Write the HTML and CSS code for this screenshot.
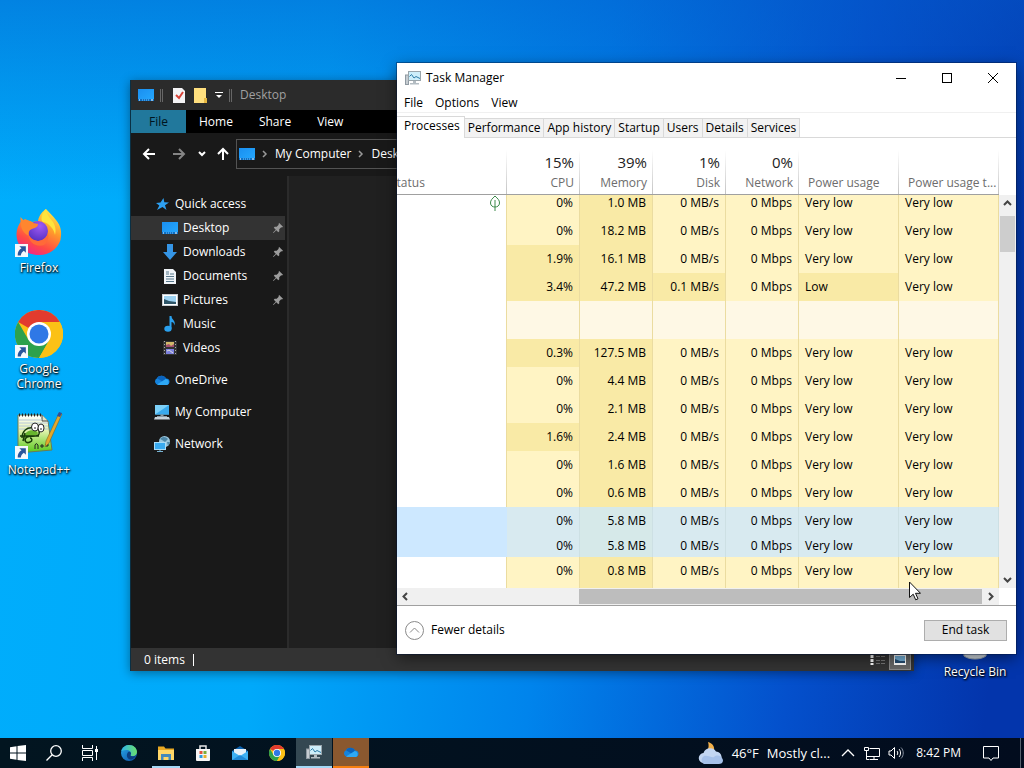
FILE: index.html
```html
<!DOCTYPE html>
<html lang="en">
<head>
    <meta charset="UTF-8">
    <meta name="viewport" content="width=device-width, initial-scale=1.0">
    <title>Desktop</title>
    <link rel="stylesheet" href="styles.css">
</head>
<body>
    <!-- Shared icons -->
    <svg class="sprite" aria-hidden="true">
        <defs>
            <linearGradient id="blue-screen" x1="0" y1="0" x2="1" y2="1">
                <stop offset="0" stop-color="#1a8ff0"/>
                <stop offset="1" stop-color="#25a9ff"/>
            </linearGradient>
            <linearGradient id="fox-body" x1="0.8" y1="0" x2="0.3" y2="1">
                <stop offset="0" stop-color="#fff04a"/>
                <stop offset="0.4" stop-color="#ff9a2b"/>
                <stop offset="0.75" stop-color="#ff4a45"/>
                <stop offset="1" stop-color="#f0258a"/>
            </linearGradient>
            <radialGradient id="fox-globe" cx="0.6" cy="0.25" r="0.8">
                <stop offset="0" stop-color="#a05af5"/>
                <stop offset="1" stop-color="#5530c0"/>
            </radialGradient>
            <linearGradient id="note-green" x1="0" y1="0" x2="0" y2="1">
                <stop offset="0" stop-color="#ffffff"/>
                <stop offset="0.4" stop-color="#e4f3b0"/>
                <stop offset="1" stop-color="#55c818"/>
            </linearGradient>
            <linearGradient id="edge-blue" x1="0" y1="0" x2="1" y2="1">
                <stop offset="0" stop-color="#28a8e8"/>
                <stop offset="1" stop-color="#0c4fa8"/>
            </linearGradient>
            <linearGradient id="edge-green" x1="0" y1="0" x2="1" y2="0">
                <stop offset="0" stop-color="#2fb5ea"/>
                <stop offset="1" stop-color="#6be06b"/>
            </linearGradient>
        </defs>
        <symbol id="icon-desktop" viewBox="0 0 16 16">
            <rect x="0" y="2" width="16" height="12" fill="url(#blue-screen)"/>
            <rect x="0" y="12" width="16" height="2" fill="#0b6fc4"/>
            <path d="M1 13h1M13 13h2" stroke="#fff"/>
            <path d="M4 13h7" stroke="#7cc6ff" stroke-dasharray="1 1"/>
        </symbol>
        <symbol id="icon-arrow" viewBox="0 0 12 12">
            <rect width="12" height="12" fill="#f5f8fc"/>
            <path d="M4 2h6v6L8.200 6.200C6.500 7.200 5.600 8.500 5.400 10.500H2.500C2.400 7.500 3.600 5.500 6 4z" fill="#2a569c"/>
        </symbol>
        <symbol id="icon-chrome" viewBox="0 0 48 48">
            <circle cx="24" cy="24" r="24" fill="#fbc116"/>
            <path d="M24 24L3.200 12A24 24 0 0 1 44.800 12z" fill="#e23b2e"/>
            <path d="M3.200 12A24 24 0 0 0 24 48L34.400 30 24 24 13.600 30z" fill="#2da14c"/>
            <path d="M24 12h20.800A24 24 0 0 1 24 48l10.400-18z" fill="#fbc116"/>
            <circle cx="24" cy="24" r="12" fill="#fff"/>
            <circle cx="24" cy="24" r="9.500" fill="#2f78e6"/>
        </symbol>
        <symbol id="icon-taskmgr" viewBox="0 0 16 16">
            <rect x="0.500" y="5" width="3" height="9.500" fill="#c6ccd1" stroke="#8f9aa2"/>
            <rect x="3.500" y="1.500" width="12" height="9" fill="#cdeefa" stroke="#9aa5ab"/>
            <path d="M4.500 6.500l2-2 2.500 3.500 2-1.500 4 2" fill="none" stroke="#2c7ba6"/>
            <path d="M8 11h3v2h-3zM5 13h9v1.500H5z" fill="#b4bdc3"/>
        </symbol>
        <symbol id="icon-pin" viewBox="0 0 10 10">
            <path d="M6.200 0L10 3.800l-1 .7-.8-.2-2 2 .1 2-1 .9L3.300 7.200.5 10 0 9.500l2.800-2.800L.8 4.700l.9-1 2 .1 2-2-.2-.8z" fill="#9c9c9c"/>
        </symbol>
        <symbol id="icon-cloud" viewBox="0 0 16 16">
            <path d="M4.500 13A3.600 3.600 0 0 1 3 6.200 5.200 5.200 0 0 1 12 6.500 3.300 3.300 0 0 1 13 13z" fill="#1583dd"/>
            <path d="M3 12.500L11.800 7A3.200 3.200 0 0 1 13 13H4.500z" fill="#2ea8f5"/>
            <path d="M3 6.200A5.200 5.200 0 0 1 12 6.500L8 9.200z" fill="#0a63bd"/>
        </symbol>
    </svg>

    <main class="desktop">
        <!-- Desktop icons -->
        <nav class="shortcuts" aria-label="Desktop icons">
            <a class="shortcut" href="#">
                <span class="shortcut-icon">
                    <svg viewBox="0 0 48 48">
                        <path d="M31 0c3 3 7 7 10 11 5 6 6 12 4.500 20A22 22 0 0 1 24 46C10 46 1.500 37 1.500 25c0-5 2-9 4-12V8l4.500 5c2-1 5-1 7 0L23 12C24 6 28 2 31 0z" fill="url(#fox-body)"/>
                        <circle cx="23" cy="22" r="10" fill="url(#fox-globe)"/>
                        <path d="M6 13l4-3c3 2 6 1 8 4l5 1c0 3-3 4-6 5-3 1-4 4-3 7-5-2-9-8-8-14z" fill="#ff862f"/>
                        <path d="M13 24c2 6 6 8 11 8 5-1 8-4 9-8 1 5 0 9-4 12-8 3-16-3-16-12z" fill="#ff6a38"/>
                        <path d="M31 0c0 5 4 9 7 13 3 5 3 9 2 13-1-6-6-12-12-13-3-2-1-9 3-13z" fill="#ffe43d"/>
                    </svg>
                    <svg class="shortcut-arrow"><use href="#icon-arrow"/></svg>
                </span>
                <span>Firefox</span>
            </a>
            <a class="shortcut" href="#">
                <span class="shortcut-icon">
                    <svg><use href="#icon-chrome"/></svg>
                    <svg class="shortcut-arrow"><use href="#icon-arrow"/></svg>
                </span>
                <span>Google Chrome</span>
            </a>
            <a class="shortcut" href="#">
                <span class="shortcut-icon">
                    <svg viewBox="0 0 48 48">
                        <path d="M3 4h24l6 6 4 29-34 3z" fill="url(#note-green)" stroke="#6d7a55"/>
                        <path d="M27 4v6h6" fill="#dde5cf" stroke="#444"/>
                        <path d="M4 9h23M4 12h29M4 15h29M4 18h29" stroke="#b8c8d8"/>
                        <path d="M4 4h22" stroke="#222" stroke-width="3" stroke-dasharray="1 2"/>
                        <path d="M9 26c1-6 7-8 12-6 4 2 1 5-4 5-4 0-6 3-7 3z" fill="#67b52e"/>
                        <path d="M7 27c0-7 5-11 11-10 5 0 7 3 6 6-2 4-8 1-12 3-4 3-1 7 3 5 3-1 2-4 0-4M5 25h19M10 22l-2 8" fill="none" stroke="#173b08" stroke-width="1.500"/>
                        <ellipse cx="20" cy="16" rx="3.500" ry="4" fill="#fff" stroke="#222"/>
                        <ellipse cx="26" cy="17" rx="3" ry="4" fill="#fff" stroke="#222"/>
                        <path d="M20 16v2M26 17v2M20 38v-4q1-3 3 0v4M25 35h4M27 33v4M30 34h4M32 32v4" fill="none" stroke="#222"/>
                        <path d="M44 2l3 1-13 29-4 4 1-6z" fill="#e3a82d" stroke="#795919" stroke-width="0.500"/>
                        <path d="M44 1l3 1-2 4-3-1z" fill="#304f98"/>
                    </svg>
                    <svg class="shortcut-arrow"><use href="#icon-arrow"/></svg>
                </span>
                <span>Notepad++</span>
            </a>
        </nav>
        <a class="shortcut recycle-bin" href="#">
            <span class="shortcut-icon">
                <svg viewBox="0 0 48 48">
                    <path d="M8 5h32l-5 38c-5 4-17 4-22 0z" fill="#d5dde4" stroke="#9daab5"/>
                </svg>
            </span>
            <span>Recycle Bin</span>
        </a>

        <!-- File Explorer -->
        <section class="window explorer" aria-label="Desktop folder">
            <header class="explorer-title">
                <svg class="icon"><use href="#icon-desktop"/></svg>
                <span class="bar"></span>
                <svg class="icon" viewBox="0 0 16 16">
                    <path d="M2 1h9l3 3v12H2z" fill="#f4f4f6"/>
                    <path d="M5 8l3 3 4-6" fill="none" stroke="#d84338" stroke-width="2"/>
                </svg>
                <svg class="icon" viewBox="0 0 16 16">
                    <path d="M1 1h12v12l1 3H1z" fill="#ffdf7e"/>
                    <path d="M11 16v-5h3v5z" fill="#e7b842"/>
                </svg>
                <svg class="icon-small" viewBox="0 0 8 8">
                    <path d="M0 1.500h8" stroke="#fff"/>
                    <path d="M1 4h6L4 7z" fill="#fff"/>
                </svg>
                <span class="bar"></span>
                <span>Desktop</span>
            </header>
            <div class="ribbon">
                <button class="ribbon-file">File</button>
                <button>Home</button>
                <button>Share</button>
                <button>View</button>
            </div>
            <div class="address-row">
                <button aria-label="Back"><svg viewBox="0 0 14 14"><path d="M13 7H2M7 2L2 7l5 5" fill="none" stroke="#fff" stroke-width="2"/></svg></button>
                <button class="forward" aria-label="Forward"><svg viewBox="0 0 14 14"><path d="M1 7h11M7 2l5 5-5 5" fill="none" stroke="#858585" stroke-width="2"/></svg></button>
                <button class="recent" aria-label="Recent"><svg viewBox="0 0 8 14"><path d="M1 5l3 3 3-3" fill="none" stroke="#fff" stroke-width="2"/></svg></button>
                <button class="up" aria-label="Up"><svg viewBox="0 0 14 14"><path d="M7 13V2M2 7l5-5 5 5" fill="none" stroke="#fff" stroke-width="2"/></svg></button>
                <div class="address">
                    <svg class="icon"><use href="#icon-desktop"/></svg>
                    <svg class="crumb" viewBox="0 0 6 8"><path d="M1 1l3 3-3 3" fill="none" stroke="#999" stroke-width="1.500"/></svg>
                    <span>My Computer</span>
                    <svg class="crumb" viewBox="0 0 6 8"><path d="M1 1l3 3-3 3" fill="none" stroke="#999" stroke-width="1.500"/></svg>
                    <span>Desktop</span>
                </div>
            </div>
            <div class="explorer-body">
                <nav class="tree" aria-label="Folders">
                    <a class="node" href="#">
                        <svg class="icon" viewBox="0 0 16 16"><path d="M9.500 2l.8 4.200 4.700.3-4 2.700 1.500 4.800L8.500 11 3 14l2.300-4.500L2 7l4.500-.6z" fill="#2da0f2"/></svg>
                        <span>Quick access</span>
                    </a>
                    <a class="node child selected" href="#">
                        <svg class="icon"><use href="#icon-desktop"/></svg>
                        <span>Desktop</span>
                        <svg class="pin"><use href="#icon-pin"/></svg>
                    </a>
                    <a class="node child" href="#">
                        <svg class="icon" viewBox="0 0 16 16"><path d="M5 0h6v8h4l-7 8-7-8h4z" fill="#3595e6"/></svg>
                        <span>Downloads</span>
                        <svg class="pin"><use href="#icon-pin"/></svg>
                    </a>
                    <a class="node child" href="#">
                        <svg class="icon" viewBox="0 0 16 16">
                            <path d="M2 1h9l3 3v12H2z" fill="#f0f4f8"/>
                            <path d="M4 4h3M4 6h3M8 6h4M4 8.500h8M4 11h8M4 13.500h8" stroke="#57788c"/>
                        </svg>
                        <span>Documents</span>
                        <svg class="pin"><use href="#icon-pin"/></svg>
                    </a>
                    <a class="node child" href="#">
                        <svg class="icon" viewBox="0 0 16 16">
                            <rect x="0.500" y="2.500" width="15" height="11" fill="#fff" stroke="#c9ced2"/>
                            <rect x="2" y="4" width="12" height="8" fill="#9ed3f2"/>
                            <path d="M2 7l5 2 7 1v2H2z" fill="#2f5668"/>
                        </svg>
                        <span>Pictures</span>
                        <svg class="pin"><use href="#icon-pin"/></svg>
                    </a>
                    <a class="node child" href="#">
                        <svg class="icon" viewBox="0 0 16 16">
                            <path d="M7.500 0h2c0 4 4.500 4 3 9.500C12 7 11 6 9.500 6v6.500h-2z" fill="#2aa1ef"/>
                            <ellipse cx="6" cy="12.800" rx="3.700" ry="3" fill="#2aa1ef"/>
                        </svg>
                        <span>Music</span>
                    </a>
                    <a class="node child" href="#">
                        <svg class="icon" viewBox="0 0 16 16">
                            <rect x="1" y="1" width="14" height="14" fill="#333"/>
                            <path d="M2.500 1v14M13.500 1v14" stroke="#aaa" stroke-dasharray="1 2"/>
                            <rect x="4" y="2" width="8" height="5" fill="#d1b96a"/>
                            <path d="M4 5l3-1 2 2 3-2v3H4z" fill="#a3506d"/>
                            <rect x="4" y="9" width="8" height="5" fill="#7c80dd"/>
                            <path d="M5 11l2-1 4 3" stroke="#ddd" fill="none"/>
                        </svg>
                        <span>Videos</span>
                    </a>
                    <a class="node group" href="#">
                        <svg class="icon"><use href="#icon-cloud"/></svg>
                        <span>OneDrive</span>
                    </a>
                    <a class="node group" href="#">
                        <svg class="icon" viewBox="0 0 16 16">
                            <rect x="1" y="1" width="14" height="9.500" fill="#7cd0f8"/>
                            <path d="M1 10.500L15 1v9.500z" fill="#3aa9ec"/>
                            <path d="M6.500 10.500h3V12h-3zM3 12h10v1H3z" fill="#8b9aa4"/>
                            <path d="M1 13h14l1 2.500H0z" fill="#c7d2da"/>
                        </svg>
                        <span>My Computer</span>
                    </a>
                    <a class="node group" href="#">
                        <svg class="icon" viewBox="0 0 16 16">
                            <circle cx="10.500" cy="5.500" r="5.500" fill="#9cc7de"/>
                            <path d="M6 3c3-3 6-2 8 0l-3 3-3-2zM13 6l3 0-2 4z" fill="#4d87a8"/>
                            <rect x="0.500" y="6.500" width="11" height="7" fill="#39aaf0" stroke="#a9dcf8"/>
                            <path d="M3 15.500h6M6 14v2" stroke="#7ab5d5"/>
                        </svg>
                        <span>Network</span>
                    </a>
                </nav>
                <div class="folder"></div>
            </div>
            <footer class="explorer-status">
                <span class="item-count">0 items</span>
                <button class="view-button" aria-label="Details view">
                    <svg viewBox="0 0 16 12">
                        <path d="M2 1v10" stroke="#fff" stroke-width="3" stroke-dasharray="3 1"/>
                        <path d="M6 2.500h10M6 6.500h10M6 9.500h10" stroke="#777" stroke-dasharray="4 1"/>
                    </svg>
                </button>
                <button class="view-button active" aria-label="Large icons view">
                    <svg viewBox="0 0 16 12">
                        <rect x="2" y="1" width="12" height="10" fill="#fff"/>
                        <rect x="3" y="2" width="10" height="7" fill="#77b4dd"/>
                        <path d="M3 5l5 2 5 0v2H3z" fill="#254c70"/>
                    </svg>
                </button>
            </footer>
        </section>

        <!-- Task Manager -->
        <section class="window task-manager" aria-label="Task Manager">
            <header class="tm-title">
                <svg class="icon"><use href="#icon-taskmgr"/></svg>
                <span class="tm-name">Task Manager</span>
                <button aria-label="Minimize"><svg viewBox="0 0 10 10"><path d="M0 5.500h10" stroke="#000"/></svg></button>
                <button aria-label="Maximize"><svg viewBox="0 0 10 10"><rect x="0.500" y="0.500" width="9" height="9" fill="none" stroke="#000"/></svg></button>
                <button aria-label="Close"><svg viewBox="0 0 10 10"><path d="M0 0l10 10M10 0L0 10" stroke="#000"/></svg></button>
            </header>
            <div class="tm-menu">
                <button>File</button>
                <button>Options</button>
                <button>View</button>
            </div>
            <div class="tm-tabs" role="tablist">
                <button class="tab active" role="tab" aria-selected="true">Processes</button>
                <button class="tab" role="tab">Performance</button>
                <button class="tab" role="tab">App history</button>
                <button class="tab" role="tab">Startup</button>
                <button class="tab" role="tab">Users</button>
                <button class="tab" role="tab">Details</button>
                <button class="tab" role="tab">Services</button>
            </div>
            <div class="tm-view">
                <table class="processes">
                    <colgroup>
                        <col>
                        <col class="col-usage">
                        <col class="col-usage">
                        <col class="col-usage">
                        <col class="col-usage">
                        <col class="col-power">
                        <col class="col-power">
                    </colgroup>
                    <thead>
                        <tr>
                            <th class="status">Status</th>
                            <th><b>15%</b>CPU</th>
                            <th><b>39%</b>Memory</th>
                            <th><b>1%</b>Disk</th>
                            <th><b>0%</b>Network</th>
                            <th class="power">Power usage</th>
                            <th class="power">Power usage t...</th>
                        </tr>
                    </thead>
                    <tbody>
                        <tr class="cut-top">
                            <td><svg class="leaf" viewBox="0 0 10 16"><path d="M5 1C2 4 .5 5 .5 8 .5 11 3 12 5 12s4.500-1 4.500-4C9.500 5 8 4 5 1zM5 5v11" fill="none" stroke="#3c8a4a"/></svg></td>
                            <td>0%</td><td>1.0 MB</td><td>0 MB/s</td><td>0 Mbps</td><td>Very low</td><td>Very low</td>
                        </tr>
                        <tr><td></td><td>0%</td><td>18.2 MB</td><td>0 MB/s</td><td>0 Mbps</td><td>Very low</td><td>Very low</td></tr>
                        <tr><td></td><td class="warm">1.9%</td><td>16.1 MB</td><td>0 MB/s</td><td>0 Mbps</td><td>Very low</td><td>Very low</td></tr>
                        <tr><td></td><td class="warm">3.4%</td><td>47.2 MB</td><td class="warm">0.1 MB/s</td><td>0 Mbps</td><td class="warm">Low</td><td>Very low</td></tr>
                        <tr class="group-row"><td></td><td></td><td></td><td></td><td></td><td></td><td></td></tr>
                        <tr><td></td><td class="warm">0.3%</td><td>127.5 MB</td><td>0 MB/s</td><td>0 Mbps</td><td>Very low</td><td>Very low</td></tr>
                        <tr><td></td><td>0%</td><td>4.4 MB</td><td>0 MB/s</td><td>0 Mbps</td><td>Very low</td><td>Very low</td></tr>
                        <tr><td></td><td>0%</td><td>2.1 MB</td><td>0 MB/s</td><td>0 Mbps</td><td>Very low</td><td>Very low</td></tr>
                        <tr><td></td><td class="warm">1.6%</td><td>2.4 MB</td><td>0 MB/s</td><td>0 Mbps</td><td>Very low</td><td>Very low</td></tr>
                        <tr><td></td><td>0%</td><td>1.6 MB</td><td>0 MB/s</td><td>0 Mbps</td><td>Very low</td><td>Very low</td></tr>
                        <tr><td></td><td>0%</td><td>0.6 MB</td><td>0 MB/s</td><td>0 Mbps</td><td>Very low</td><td>Very low</td></tr>
                        <tr class="picked"><td></td><td>0%</td><td>5.8 MB</td><td>0 MB/s</td><td>0 Mbps</td><td>Very low</td><td>Very low</td></tr>
                        <tr class="picked"><td></td><td>0%</td><td>5.8 MB</td><td>0 MB/s</td><td>0 Mbps</td><td>Very low</td><td>Very low</td></tr>
                        <tr><td></td><td>0%</td><td>0.8 MB</td><td>0 MB/s</td><td>0 Mbps</td><td>Very low</td><td>Very low</td></tr>
                        <tr class="cut-bottom"><td></td><td></td><td></td><td></td><td></td><td></td><td></td></tr>
                    </tbody>
                </table>
                <div class="scroll-y">
                    <button aria-label="Scroll up"><svg viewBox="0 0 9 9"><path d="M1 6l3.500-3.500L8 6" fill="none" stroke="#444" stroke-width="2"/></svg></button>
                    <div class="thumb"></div>
                    <button aria-label="Scroll down"><svg viewBox="0 0 9 9"><path d="M1 3l3.500 3.500L8 3" fill="none" stroke="#444" stroke-width="2"/></svg></button>
                </div>
            </div>
            <div class="scroll-x">
                <button aria-label="Scroll left"><svg viewBox="0 0 9 9"><path d="M6 1L2.500 4.500 6 8" fill="none" stroke="#444" stroke-width="2"/></svg></button>
                <div class="thumb"></div>
                <button aria-label="Scroll right"><svg viewBox="0 0 9 9"><path d="M3 1l3.500 3.500L3 8" fill="none" stroke="#444" stroke-width="2"/></svg></button>
            </div>
            <footer class="tm-footer">
                <button class="fewer">
                    <svg viewBox="0 0 19 19"><circle cx="9.500" cy="9.500" r="9" fill="none" stroke="#8a8a8a"/><path d="M5 11.500L9.500 7l4.500 4.500" fill="none" stroke="#8a8a8a"/></svg>
                    Fewer details
                </button>
                <button class="end-task">End task</button>
            </footer>
        </section>

        <svg class="cursor" viewBox="0 0 12 20"><path d="M.5 1v15.500l3.700-3.300 2.500 5.600 2.300-1-2.500-5.500h5z" fill="#fff" stroke="#111"/></svg>
    </main>

    <!-- Taskbar -->
    <footer class="taskbar">
        <button aria-label="Start"><svg viewBox="0 0 16 16"><path d="M0 2.200L6.500 1.300v6.200H0zM7.500 1.100L16 0v7.500H7.500zM0 8.500h6.500v6.200L0 13.800zM7.500 8.500H16V16l-8.500-1.100z" fill="#fff"/></svg></button>
        <button aria-label="Search"><svg viewBox="0 0 16 16"><circle cx="10" cy="6" r="5.300" fill="none" stroke="#fff" stroke-width="1.300"/><path d="M6.200 9.800L.5 15.500" stroke="#fff" stroke-width="1.300"/></svg></button>
        <button aria-label="Task view"><svg viewBox="0 0 16 16"><path d="M.5 0v3.500h10V0M.5 5.500h10v5H.5zM.5 16v-3.500h10V16M14.500 1v14" fill="none" stroke="#fff"/><path d="M13 4h3v3h-3z" fill="#fff"/></svg></button>
        <div class="apps">
            <button aria-label="Edge">
                <svg viewBox="0 0 16 16">
                    <circle cx="8" cy="8" r="8" fill="url(#edge-blue)"/>
                    <path d="M.3 6C2 1 6 0 8 0c5 0 8 3.500 8 7 0 3-2.500 4.500-4.800 4.300-2-.2-2-1.300-1.200-2.300C10.500 6 7 3.500.3 6z" fill="url(#edge-green)"/>
                    <path d="M10 9c-1 1-.7 2.200 1.200 2.300 1.500.1 3-.4 4-1.300-1 3-4 5-6 4.500C5 13.500 5 8 8 6.500c1.500.3 2.200 1.500 2 2.500z" fill="#0c3e80"/>
                </svg>
            </button>
            <button class="open" aria-label="File Explorer">
                <svg viewBox="0 0 16 16">
                    <path d="M0 1.500h6l1.500 2H16V14H0z" fill="#e9a923"/>
                    <path d="M0 5h16v10H0z" fill="#ffd768"/>
                    <path d="M3 15V9h10v6h-2.500v-3h-5v3z" fill="#4389bb"/>
                </svg>
            </button>
            <button aria-label="Store">
                <svg viewBox="0 0 16 16">
                    <path d="M5 4V1h6v3" fill="none" stroke="#e9e9e9" stroke-width="1.500"/>
                    <path d="M1 4h14v11a1 1 0 0 1-1 1H2a1 1 0 0 1-1-1z" fill="#f7f7f7"/>
                    <path d="M4.500 6H7.500v3h-3z" fill="#e2543c"/><path d="M8.500 6h3v3h-3z" fill="#7aae3c"/>
                    <path d="M4.500 10h3v3h-3z" fill="#2c9be0"/><path d="M8.500 10h3v3h-3z" fill="#e9b12d"/>
                </svg>
            </button>
            <button aria-label="Mail">
                <svg viewBox="0 0 16 16">
                    <path d="M0 6l8-5 8 5v9H0z" fill="#0c62ae"/>
                    <path d="M2 4h12v7H2z" fill="#e9f2f8"/>
                    <path d="M0 6l8 5 8-5v9H0z" fill="#3fb1f2"/>
                    <path d="M0 15l8-5 8 5z" fill="#2089d6"/>
                </svg>
            </button>
            <button aria-label="Chrome"><svg><use href="#icon-chrome"/></svg></button>
            <button class="open focused" aria-label="Task Manager"><svg><use href="#icon-taskmgr"/></svg></button>
            <button class="open attention" aria-label="OneDrive"><svg><use href="#icon-cloud"/></svg></button>
        </div>
        <button class="weather">
            <svg viewBox="0 0 26 24">
                <path d="M10 1c4 1 7 4 6 9l-4 5-8-2C9 11 12 7 10 1z" fill="#f2b04a"/>
                <path d="M6 22a5 5 0 0 1-.5-10A7 7 0 0 1 18 10.500 6 6 0 0 1 20 22z" fill="#c3d6f2"/>
                <path d="M6 23a4.500 4.500 0 0 1 0-8c4-1 8 2 10 1 3-3 8-1 9 3a4 4 0 0 1-4 4z" fill="#a6c1ea"/>
            </svg>
            <span>46°F</span>
            <span>Mostly cl...</span>
        </button>
        <div class="tray">
            <svg viewBox="0 0 16 16"><path d="M2 11l6-6 6 6" fill="none" stroke="#fff" stroke-width="1.300"/></svg>
            <svg viewBox="0 0 16 16"><path d="M5.500 3.500h10v8H3M10 11.500v3M6 14.500h8M.5 2.500h4v3h-4zM2.500 6v8.500h3" fill="none" stroke="#fff"/></svg>
            <svg viewBox="0 0 16 16"><path d="M1 6h2l3.500-3.500v11L3 10H1zM9 6c1 1 1 3 0 4M11 4c2 2 2 6 0 8" fill="none" stroke="#fff"/><path d="M13 2.500c3 3 3 8 0 11" fill="none" stroke="#8891a0"/></svg>
        </div>
        <time>8:42 PM</time>
        <button class="notifications" aria-label="Notifications"><svg viewBox="0 0 16 16"><path d="M.5 1.500h15v11.500H10L8 15.500 6 13H.5z" fill="none" stroke="#fff"/></svg></button>
    </footer>
</body>
</html>
```

FILE: styles.css
```css
/* General styles */
* {
    box-sizing: border-box;
}

body {
    margin: 0;
    min-height: 100vh;
    display: flex;
    flex-direction: column;
    overflow: hidden;
    font-family: "Segoe UI", "Open Sans", "Noto Sans", sans-serif;
    font-size: 12px;
    line-height: 16px;
    color: #000;
    background:
        linear-gradient(180deg, rgba(4, 88, 200, 0.5) 0, rgba(4, 88, 200, 0) 200px),
        linear-gradient(97deg, #00aefc 0%, #00a9fa 30%, #0084ec 55%, #0450cc 78%, #0335ac 96%);
}

button {
    padding: 0;
    border: 0;
    background: none;
    color: inherit;
    font: inherit;
}

a {
    color: inherit;
    text-decoration: none;
}

svg {
    display: block;
    flex: none;
}

.sprite {
    position: absolute;
    width: 0;
    height: 0;
}

.icon {
    width: 16px;
    height: 16px;
}

.desktop {
    position: relative;
    flex: 1;
}

/* Desktop icons */
.shortcuts {
    display: flex;
    flex-direction: column;
    width: 78px;
    padding-top: 209px;
}

.shortcut {
    display: flex;
    flex-direction: column;
    align-items: center;
    gap: 3px;
    width: 78px;
    height: 101px;
    padding: 0 8px;
    line-height: 15px;
    text-align: center;
    color: #fff;
    text-shadow: 1px 1px 2px #000, 0 1px 2px #000;
}

.shortcut-icon {
    position: relative;
}

.shortcut-icon svg {
    width: 48px;
    height: 48px;
}

.shortcut-icon .shortcut-arrow {
    position: absolute;
    left: 0;
    bottom: 0;
    width: 13px;
    height: 13px;
}

.recycle-bin {
    position: absolute;
    top: 613px;
    right: 10px;
    padding: 0;
}

/* Windows */
.window {
    position: absolute;
    display: flex;
    flex-direction: column;
}

/* File Explorer */
.explorer {
    left: 130px;
    top: 80px;
    width: 784px;
    height: 591px;
    border-left: 1px solid #0a3044;
    background: #191919;
    color: #fff;
    box-shadow: 0 2px 10px rgba(0, 0, 0, 0.4);
}

.explorer-title {
    display: flex;
    align-items: center;
    gap: 6px;
    height: 30px;
    padding-left: 7px;
    background: #2b2b2b;
    color: #a0a0a0;
}

.icon-small {
    width: 8px;
    height: 8px;
}

.bar {
    width: 3px;
    height: 13px;
    margin-right: 2px;
    border: 1px solid #666;
    border-width: 0 1px;
}

.ribbon {
    display: flex;
    height: 23px;
    background: #000;
}

.ribbon button {
    padding: 0 13px;
}

.ribbon .ribbon-file {
    width: 55px;
    background: #21789c;
    color: #001420;
}

.address-row {
    display: flex;
    align-items: center;
    gap: 6px;
    height: 43px;
    padding: 0 0 2px 11px;
}

.address-row button {
    width: 14px;
}

.address-row .forward {
    margin-left: 10px;
}

.address-row .recent {
    width: 8px;
    margin-left: 6px;
}

.address-row .up {
    margin-left: 4px;
}

.address {
    display: flex;
    flex: 1;
    align-items: center;
    gap: 7px;
    height: 30px;
    padding-left: 2px;
    border: 1px solid #535353;
}

.crumb {
    width: 6px;
    height: 8px;
}

.explorer-body {
    display: flex;
    flex: 1;
}

.tree {
    width: 154px;
    padding-top: 16px;
}

.node {
    display: flex;
    align-items: center;
    gap: 5px;
    height: 24px;
    padding: 0 2px 0 23px;
}

.node.child {
    padding-left: 31px;
}

.node.group {
    margin-top: 8px;
}

.node.selected {
    background: #333;
}

.pin {
    width: 10px;
    height: 10px;
    margin-left: auto;
}

.folder {
    flex: 1;
    margin-left: 2px;
    border-left: 2px solid #2b2b2b;
    background: #202020;
}

.explorer-status {
    display: flex;
    align-items: center;
    height: 23px;
    padding: 0 3px 0 13px;
    background: #333;
}

.item-count {
    margin-right: auto;
    padding-right: 8px;
    border-right: 1px solid #fff;
    line-height: 12px;
}

.view-button {
    display: grid;
    place-items: center;
    width: 22px;
    height: 21px;
}

.view-button.active {
    border: 1px solid #888;
    background: #666;
}

.view-button svg {
    width: 16px;
    height: 12px;
}

/* Task Manager */
.task-manager {
    left: 397px;
    top: 63px;
    width: 619px;
    background: #fff;
    box-shadow: 0 0 0 1px rgba(0, 20, 60, 0.4), 0 4px 14px rgba(0, 0, 0, 0.5);
}

.tm-title {
    display: flex;
    align-items: center;
    height: 29px;
    padding-left: 8px;
}

.tm-name {
    margin-right: auto;
    padding-left: 5px;
}

.tm-title button {
    display: grid;
    place-items: center;
    width: 46px;
    height: 29px;
}

.tm-title button svg {
    width: 10px;
    height: 10px;
}

.tm-menu {
    display: flex;
    gap: 12px;
    height: 21px;
    padding: 2px 0 0 7px;
    border-bottom: 1px solid #f0f0f0;
}

.tm-tabs {
    display: flex;
    align-items: flex-end;
    height: 25px;
    padding-top: 2px;
    border-bottom: 1px solid #d9d9d9;
}

.tab {
    height: 19px;
    padding: 0 3px;
    border: 1px solid #d9d9d9;
    border-width: 1px 1px 0 0;
    background: #f2f2f2;
}

.tab.active {
    height: 22px;
    margin-bottom: -1px;
    padding: 0 4px 3px 7px;
    background: #fff;
}

.tm-view {
    display: flex;
}

.processes {
    flex: 1;
    width: 100%;
    table-layout: fixed;
    border-spacing: 0;
}

.col-usage {
    width: 73px;
}

.col-power {
    width: 100px;
}

.processes th {
    height: 57px;
    padding: 0 6px 3px;
    border-bottom: 1px solid #a0a0a0;
    background: linear-gradient(#fff, #c4c4c4) right bottom / 1px 44px no-repeat;
    vertical-align: bottom;
    text-align: right;
    font-weight: normal;
    color: #6d6d6d;
}

.processes th b {
    display: block;
    margin-bottom: 3px;
    font-size: 15px;
    line-height: 20px;
    font-weight: normal;
    color: #222;
}

.processes th.status {
    overflow: hidden;
    text-align: left;
    text-indent: -13px;
}

.processes th.power {
    padding-right: 0;
    padding-left: 9px;
    text-align: left;
    white-space: nowrap;
}

.processes td {
    height: 28px;
    padding: 0 6px;
    border-right: 1px solid #ebdca0;
    background: #fff4c4;
    text-align: right;
}

.processes td:first-child {
    background: #fff;
}

.processes td:nth-child(n + 6) {
    text-align: left;
}

.processes td:nth-child(3),
.processes td.warm {
    background: #f9eaa6;
}

.processes .group-row td {
    height: 38px;
    background: #fef8e5;
}

.processes .group-row td:first-child {
    background: #fff;
}

.processes .cut-top td {
    height: 22px;
    vertical-align: top;
}

.processes .cut-bottom td {
    height: 3px;
}

.processes .picked td {
    height: 25px;
    padding-top: 2px;
    border-color: #cde0e4;
    background: #d8eaf0;
}

.processes .picked td:nth-child(3) {
    background: #d6e9e9;
}

.processes .picked td:first-child {
    border-color: #cde8ff;
    background: #cde8ff;
}

.leaf {
    width: 10px;
    height: 16px;
    margin-left: auto;
}

.scroll-y {
    display: flex;
    flex: none;
    flex-direction: column;
    width: 17px;
    margin-top: 57px;
    background: #f0f0f0;
}

.scroll-y button,
.scroll-x button {
    display: grid;
    place-items: center;
    width: 17px;
    height: 17px;
}

.scroll-y svg,
.scroll-x svg {
    width: 9px;
    height: 9px;
}

.scroll-y .thumb {
    height: 36px;
    margin: 4px 1px auto;
    background: #cdcdcd;
}

.scroll-x {
    display: flex;
    height: 17px;
    margin-right: 17px;
    background: #f0f0f0;
}

.scroll-x .thumb {
    flex: 1;
    height: 15px;
    margin: 1px 0 0 165px;
    background: #bdbdbd;
}

.tm-footer {
    display: flex;
    align-items: center;
    justify-content: space-between;
    height: 49px;
    padding: 0 9px 0 8px;
    border-top: 1px solid #a0a0a0;
}

.fewer {
    display: flex;
    align-items: center;
    gap: 7px;
}

.fewer svg {
    width: 19px;
    height: 19px;
}

.end-task {
    width: 83px;
    height: 21px;
    border: 1px solid #adadad;
    background: #e1e1e1;
}

.cursor {
    position: absolute;
    left: 909px;
    top: 581px;
    width: 12px;
    height: 20px;
}

/* Taskbar */
.taskbar {
    display: flex;
    height: 30px;
    padding-right: 3px;
    background: linear-gradient(90deg, #021520, #020c1e);
    color: #fff;
}

.taskbar button {
    display: grid;
    place-items: center;
    width: 36px;
    height: 30px;
}

.taskbar svg {
    width: 16px;
    height: 16px;
}

.apps {
    display: flex;
    gap: 1px;
    margin: 0 auto 0 3px;
}

.apps .open {
    background: linear-gradient(#a5d8f5, #a5d8f5) center bottom / 28px 2px no-repeat;
}

.apps .focused {
    background: #344852;
    border-bottom: 2px solid #a5d8f5;
}

.apps .attention {
    background: #8a582f;
    border-bottom: 2px solid #f77f10;
}

.taskbar .weather {
    display: flex;
    align-items: center;
    gap: 8px;
    width: auto;
    font-size: 13px;
}

.taskbar .weather svg {
    width: 26px;
    height: 24px;
}

.tray {
    display: flex;
    align-items: center;
    gap: 8px;
    padding: 0 12px 0 10px;
}

.taskbar time {
    line-height: 30px;
}

.taskbar .notifications {
    width: 60px;
    border-right: 1px solid #56616d;
}
```
